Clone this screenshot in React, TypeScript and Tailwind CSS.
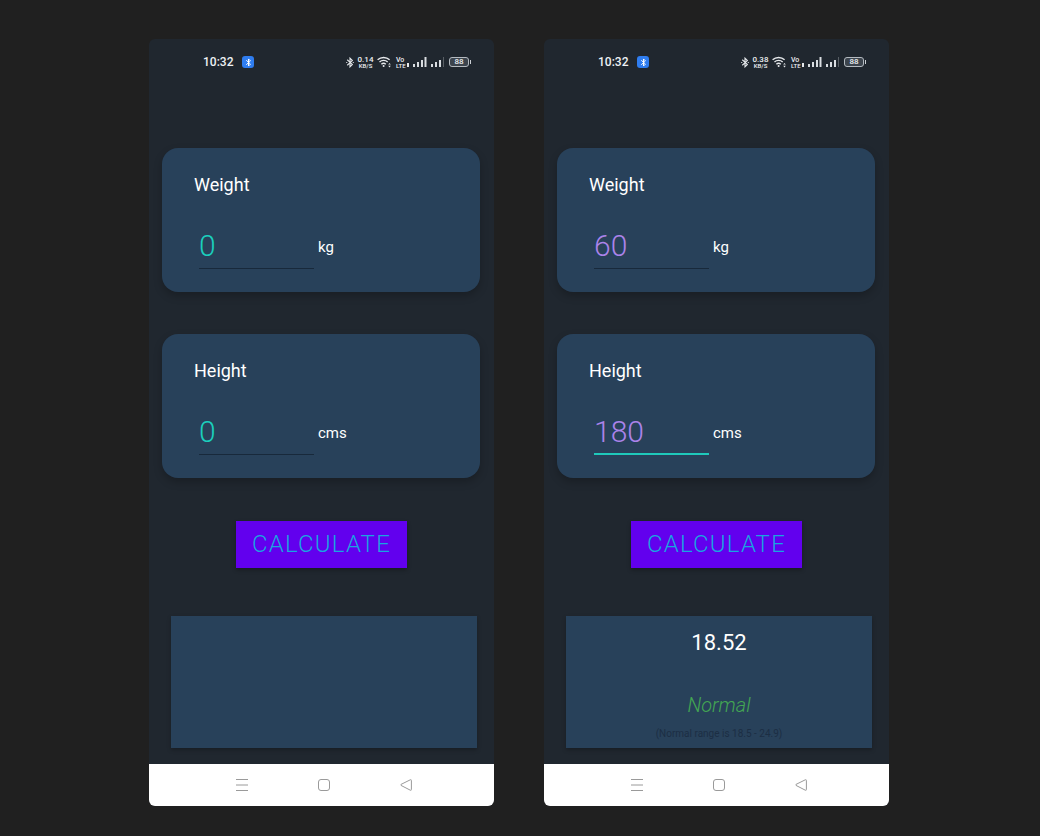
import { useId, useState } from "react";

const BT_PATH = "M1.5 3.5 8 9.5 5 12.5V1.5L8 4.5 1.5 10.5";

function StatusBar({ rate }: { rate: string }) {
  return (
    <header className="flex h-[46px] items-center pr-[23px] pl-[54px] text-[#eef1f4]">
      <span className="text-xs font-medium">10:32</span>
      <span className="ml-[9px] flex size-3 items-center justify-center rounded-[3px] bg-[#2f7df0]">
        <svg width="7" height="9" viewBox="0 0 10 14" fill="none" stroke="#fff" strokeWidth="1.5" aria-hidden="true">
          <path d={BT_PATH} />
        </svg>
      </span>
      <div className="ml-auto flex items-center gap-1">
        <svg width="8" height="11" viewBox="0 0 10 14" fill="none" stroke="#e6e9ec" strokeWidth="1.4" aria-hidden="true">
          <path d={BT_PATH} />
          <path d="M.2 7h1.3M8.5 7h1.3" />
        </svg>
        <span className="flex w-[15px] flex-col items-center font-medium">
          <span className="text-[8px] leading-[7px]">{rate}</span>
          <span className="text-[6px] leading-[5px]">KB/S</span>
        </span>
        <svg width="15" height="12" viewBox="0 0 15 12" fill="none" stroke="#e6e9ec" strokeWidth="1.4" aria-hidden="true">
          <path d="M.6 3.8a8.8 8.8 0 0 1 12 0M2.5 6a6 6 0 0 1 8.200 0M4.400 8.200a3.300 3.300 0 0 1 4.400 0" />
          <circle cx="6.6" cy="10" r="1" fill="#e6e9ec" stroke="none" />
          <path d="M11.200 8.600 12.500 7l1.300 1.600zM11.200 9.800l1.300 1.600 1.300-1.600z" fill="#e6e9ec" stroke="none" />
        </svg>
        <span className="flex w-[13px] flex-col font-medium">
          <span className="text-[7px] leading-[6px]">Vo</span>
          <span className="flex items-center gap-px text-[6px] leading-[5px]">
            LTE
            <span className="h-1 w-[3px] border border-[#e6e9ec]" />
          </span>
        </span>
        <svg width="14" height="10" viewBox="0 0 14 10" fill="#d9dde1" aria-hidden="true">
          <path d="M0 7h2v3H0zM4 5h2v5H4zM8 3h2v7H8zM11.500 0h2v10h-2z" />
        </svg>
        <svg width="14" height="10" viewBox="0 0 14 10" fill="#d9dde1" aria-hidden="true">
          <path d="M0 7h2v3H0zM4 5h2v5H4zM8 3h2v7H8z" />
          <path d="M12 0h1v10h-1z" opacity=".3" />
        </svg>
        <span className="flex items-center">
          <span className="flex h-[10px] w-5 items-center justify-center rounded-[3px] border border-[#b4bac0] bg-[#3c444d] text-[8px] leading-[8px] font-medium">
            88
          </span>
          <span className="ml-px h-1 w-px bg-[#c9ced3]" />
        </span>
      </div>
    </header>
  );
}

type FieldProps = {
  label: string;
  unit: string;
  value: string;
  edited: boolean;
  active: boolean;
  onChange: (value: string) => void;
};

function FieldCard({ label, unit, value, edited, active, onChange }: FieldProps) {
  const id = useId();
  return (
    <section className="rounded-2xl bg-[#28415a] pt-[25px] pr-8 pb-[23px] pl-8 shadow-[0_4px_8px_rgba(0,0,0,0.22)]">
      <label htmlFor={id} className="block text-lg leading-6 text-white">
        {label}
      </label>
      <div className="mt-[26px] flex items-center gap-1 pl-[5px]">
        <input
          id={id}
          inputMode="numeric"
          value={value}
          onChange={(event) => onChange(event.target.value)}
          className={`h-[46px] w-[115px] min-w-0 bg-transparent text-3xl font-light outline-none ${
            active ? "border-b-2 border-[#1fc9bb]" : "border-b border-[#18293b]"
          } ${edited ? "text-[#ab83ea]" : "text-[#1bcfbd]"}`}
        />
        <span className="pt-0.5 text-[15px] leading-6 text-white">{unit}</span>
      </div>
    </section>
  );
}

function NavBar() {
  return (
    <nav className="flex h-[42px] items-center justify-center gap-[70px] bg-white pl-[5px] text-[#9a9a9a]">
      <button type="button" aria-label="Recent apps">
        <svg width="12" height="12" viewBox="0 0 12 12" stroke="currentColor" aria-hidden="true">
          <path d="M0 .5h12M0 6h12M0 11.500h12" />
        </svg>
      </button>
      <button type="button" aria-label="Home">
        <svg width="12" height="12" viewBox="0 0 12 12" fill="none" stroke="currentColor" aria-hidden="true">
          <rect x=".5" y=".5" width="11" height="11" rx="2.500" />
        </svg>
      </button>
      <button type="button" aria-label="Back">
        <svg width="12" height="12" viewBox="0 0 12 12" fill="none" stroke="currentColor" strokeLinejoin="round" aria-hidden="true">
          <path d="M10.300.8 1 5.400q-.8.500 0 1l9.300 4.800q1.100.4 1.100-.6V1.400q0-1-1.100-.6z" />
        </svg>
      </button>
    </nav>
  );
}

type PhoneProps = {
  rate: string;
  initialWeight: string;
  initialHeight: string;
  activeField?: "weight" | "height";
};

function bmiOf(weight: string, height: string) {
  const metres = Number(height) / 100;
  const kilos = Number(weight);
  return metres > 0 && kilos > 0 ? kilos / (metres * metres) : null;
}

function Phone({ rate, initialWeight, initialHeight, activeField }: PhoneProps) {
  const [weight, setWeight] = useState(initialWeight);
  const [height, setHeight] = useState(initialHeight);
  const [bmi, setBmi] = useState(bmiOf(initialWeight, initialHeight));
  const verdict = bmi === null ? "" : bmi < 18.5 ? "Underweight" : bmi < 25 ? "Normal" : "Overweight";

  return (
    <article className="flex max-w-[345px] min-w-0 flex-1 flex-col overflow-hidden rounded-md bg-[#20272f]">
      <StatusBar rate={rate} />
      <div className="flex flex-col gap-[42px] pt-[63px] pr-[14px] pl-[13px]">
        <FieldCard
          label="Weight"
          unit="kg"
          value={weight}
          edited={weight !== "0"}
          active={activeField === "weight"}
          onChange={setWeight}
        />
        <FieldCard
          label="Height"
          unit="cms"
          value={height}
          edited={height !== "0"}
          active={activeField === "height"}
          onChange={setHeight}
        />
      </div>
      <button
        type="button"
        onClick={() => setBmi(bmiOf(weight, height))}
        className="mt-[43px] h-[47px] self-center bg-[#6200ee] px-4 pb-0.5 text-2xl font-light tracking-wider text-[#18a6e0] shadow-[0_2px_4px_rgba(0,0,0,0.3)]"
      >
        CALCULATE
      </button>
      <output className="mt-12 mr-[17px] mb-4 ml-[22px] flex h-[132px] flex-col items-center bg-[#28415a] pt-[11px] shadow-[0_2px_4px_rgba(0,0,0,0.25)]">
        {bmi !== null && (
          <>
            <span className="text-[22px] leading-8 text-white">{bmi.toFixed(2)}</span>
            <span className="mt-[34px] text-xl leading-6 font-light text-[#43a653] italic">{verdict}</span>
            <span className="mt-[9px] text-[10px] leading-4 text-[#1c2e44]">(Normal range is 18.5 - 24.9)</span>
          </>
        )}
      </output>
      <NavBar />
    </article>
  );
}

export default function App() {
  return (
    <main className="flex min-h-screen items-start justify-center gap-[50px] bg-[#202020] pt-[39px] pr-0.5 pb-[30px] font-['Roboto','Noto_Sans',sans-serif] antialiased">
      <Phone rate="0.14" initialWeight="0" initialHeight="0" />
      <Phone rate="0.38" initialWeight="60" initialHeight="180" activeField="height" />
    </main>
  );
}
